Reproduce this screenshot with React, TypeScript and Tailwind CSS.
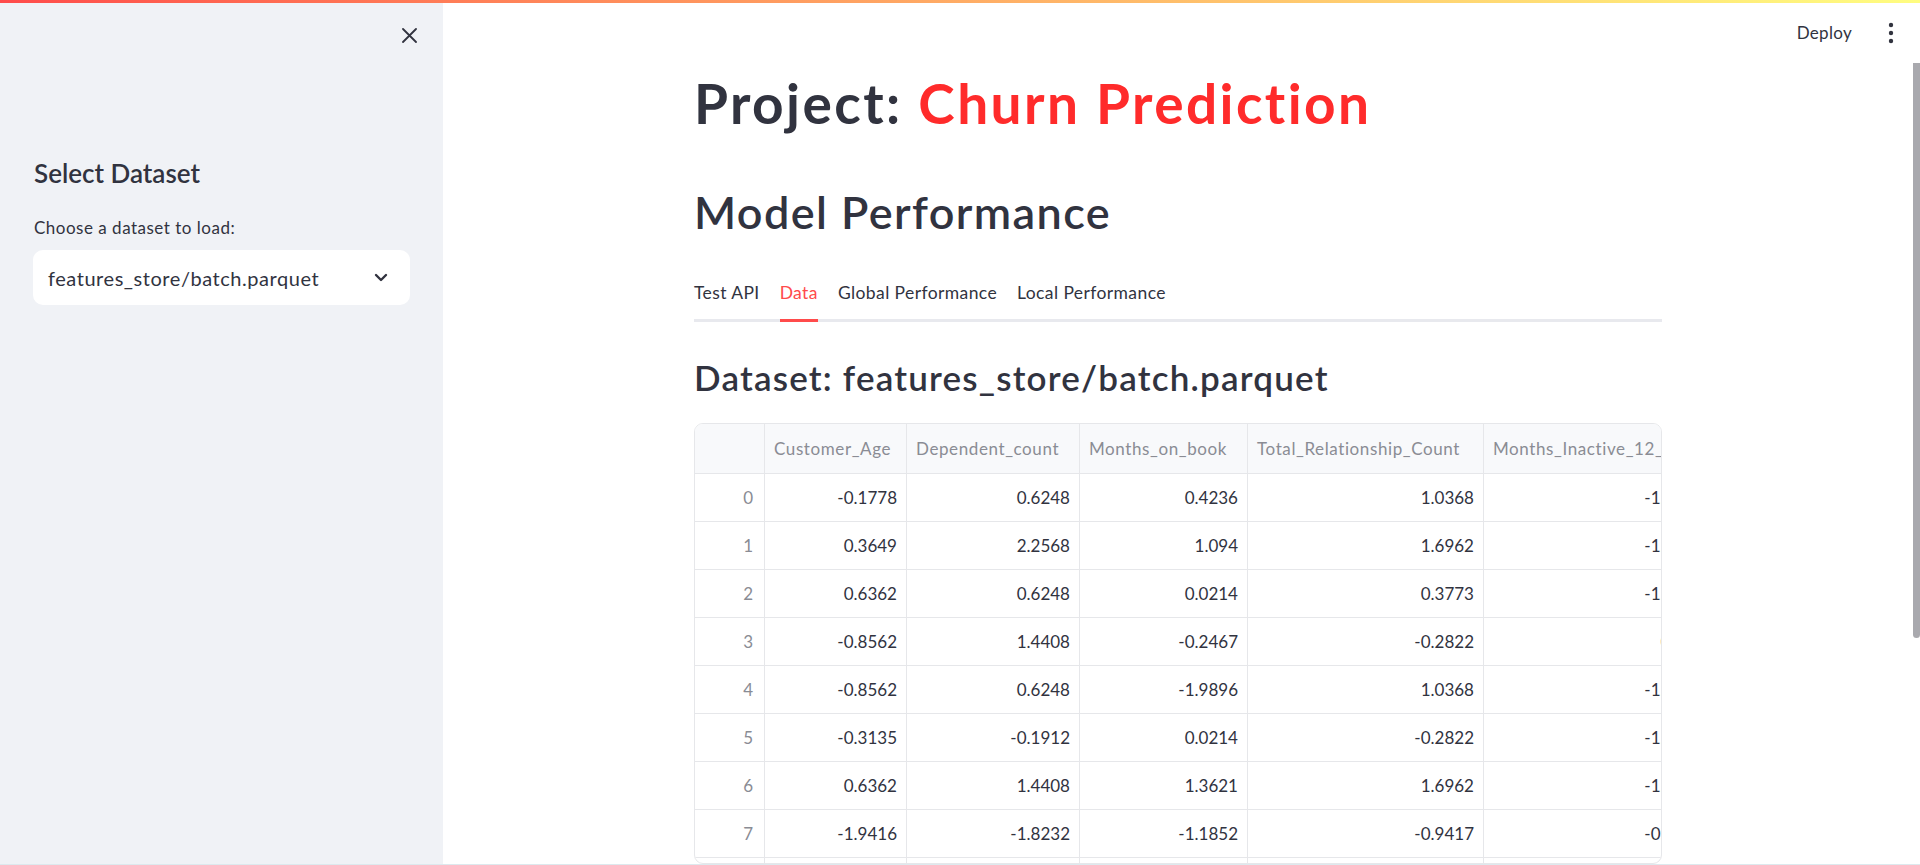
import React from 'react';

const columns = [
  { key: 'Customer_Age', width: 'w-[142px]' },
  { key: 'Dependent_count', width: 'w-[173px]' },
  { key: 'Months_on_book', width: 'w-[168px]' },
  { key: 'Total_Relationship_Count', width: 'w-[236px]' },
  { key: 'Months_Inactive_12_mon', width: 'w-[230px]' },
];

const rows = [
  ['-0.1778', '0.6248', '0.4236', '1.0368', '-1.3273'],
  ['0.3649', '2.2568', '1.094', '1.6962', '-1.3273'],
  ['0.6362', '0.6248', '0.0214', '0.3773', '-1.3273'],
  ['-0.8562', '1.4408', '-0.2467', '-0.2822', '0.641'],
  ['-0.8562', '0.6248', '-1.9896', '1.0368', '-1.3273'],
  ['-0.3135', '-0.1912', '0.0214', '-0.2822', '-1.3273'],
  ['0.6362', '1.4408', '1.3621', '1.6962', '-1.3273'],
  ['-1.9416', '-1.8232', '-1.1852', '-0.9417', '-0.3427'],
  ['0.2291', '-0.1912', '0.5512', '0.3773', '-1.3273'],
];

const tabs = ['Test API', 'Data', 'Global Performance', 'Local Performance'];

function Sidebar() {
  return (
    <aside className="w-[443px] shrink-0 bg-[#f0f2f6] flex flex-col px-[33px]">
      {/* close button */}
      <div className="h-[65px] flex items-center justify-end -mr-[7px]">
        <svg width="15" height="15" viewBox="0 0 15 15" className="text-[#31333f]">
          <path d="M1 1L14 14M14 1L1 14" stroke="currentColor" strokeWidth="1.8" strokeLinecap="round" />
        </svg>
      </div>

      <h3 className="mt-[89px] text-[26px] leading-[32px] font-semibold text-[#31333f] pl-[1px]">Select Dataset</h3>

      <label className="mt-[27px] text-[17px] leading-[24px] tracking-[0.5px] text-[#31333f] pl-[1px]">
        Choose a dataset to load:
      </label>

      <div className="mt-[10px] h-[55px] bg-white rounded-[10px] flex items-center justify-between pl-[15px] pr-[22px]">
        <span className="text-[20px] tracking-[0.55px] text-[#31333f]">features_store/batch.parquet</span>
        <svg width="14" height="9" viewBox="0 0 14 9" className="text-[#31333f]">
          <path d="M2 2L7 7L12 2" fill="none" stroke="currentColor" strokeWidth="2.4" strokeLinecap="round" strokeLinejoin="round" />
        </svg>
      </div>
    </aside>
  );
}

function DataTable() {
  return (
    <div className="mt-[25px] w-full rounded-[9px] border border-[#e6e7ea] overflow-hidden">
      <div className="w-max">
        {/* header */}
        <div className="flex h-[50px] bg-[#f8f9fb] border-b border-[#e6e7ea]">
          <div className="w-[70px] shrink-0 border-r border-[#e6e7ea]" />
          {columns.map((c) => (
            <div
              key={c.key}
              className={`${c.width} shrink-0 border-r border-[#e6e7ea] flex items-center pl-[9px] text-[17px] tracking-[0.6px] text-[#8a8c94] whitespace-nowrap overflow-hidden`}
            >
              {c.key}
            </div>
          ))}
        </div>
        {rows.map((r, i) => (
          <div key={i} className="flex h-[48px] border-b border-[#e6e7ea]">
            <div className="w-[70px] shrink-0 border-r border-[#e6e7ea] flex items-center justify-end pr-[11px] text-[17px] text-[#8a8c94]">
              {i}
            </div>
            {r.map((v, j) => (
              <div
                key={j}
                className={`${columns[j].width} shrink-0 border-r border-[#e6e7ea] flex items-center justify-end pr-[9px] text-[17px] text-[#31333f]`}
              >
                {v}
              </div>
            ))}
          </div>
        ))}
      </div>
    </div>
  );
}

export default function App() {
  return (
    <div className="w-[1920px] h-[865px] flex flex-col overflow-hidden bg-white font-['Lato',sans-serif] text-[#31333f]">
      {/* decoration bar */}
      <div className="h-[3px] shrink-0 bg-linear-to-r from-[#ff4b4b] to-[#fffd80]" />

      <div className="flex flex-1 min-h-0">
        <Sidebar />

        <main className="flex-1 flex flex-col min-w-0">
          {/* toolbar */}
          <header className="h-[60px] shrink-0 flex items-center justify-end pr-[25px] gap-[35px]">
            <span className="text-[17px] tracking-[0.3px] text-[#31333f]">Deploy</span>
            <svg width="8" height="22" viewBox="0 0 8 22" className="text-[#31333f]">
              <circle cx="4" cy="3" r="2.2" fill="currentColor" />
              <circle cx="4" cy="11" r="2.2" fill="currentColor" />
              <circle cx="4" cy="19" r="2.2" fill="currentColor" />
            </svg>
          </header>

          <div className="flex flex-1 min-h-0">
            <div className="flex-1 min-w-0 flex justify-center">
              <div className="w-[968px] flex flex-col">
                <h1 className="mt-[7px] text-[55px] leading-[66px] font-bold tracking-[2.4px] whitespace-nowrap">
                  Project: <span className="text-[#ff2b2b]">Churn Prediction</span>
                </h1>

                <h2 className="mt-[49px] text-[45px] leading-[54px] font-semibold tracking-[1.4px]">Model Performance</h2>

                {/* tabs */}
                <div className="mt-[42px] flex gap-[20px] shadow-[inset_0_-3px_0_#e8e9ee]">
                  {tabs.map((t) => (
                    <div
                      key={t}
                      className={`pb-[14px] text-[17.5px] leading-[24px] tracking-[0.4px] border-b-[3px] ${
                        t === 'Data' ? 'border-[#ff4b4b] text-[#ff4b4b]' : 'border-transparent text-[#31333f]'
                      }`}
                    >
                      {t}
                    </div>
                  ))}
                </div>

                <h3 className="mt-[34px] text-[35px] leading-[42px] font-semibold tracking-[1.2px] whitespace-nowrap">
                  Dataset: features_store/batch.parquet
                </h3>

                <DataTable />
              </div>
            </div>

            {/* scrollbar */}
            <div className="w-[7px] shrink-0">
              <div className="h-[575px] bg-[#a9a9ae] rounded-b-[4px]" />
            </div>
          </div>
        </main>
      </div>

      <div className="h-[1px] shrink-0 bg-[#dde9ee]" />
    </div>
  );
}
